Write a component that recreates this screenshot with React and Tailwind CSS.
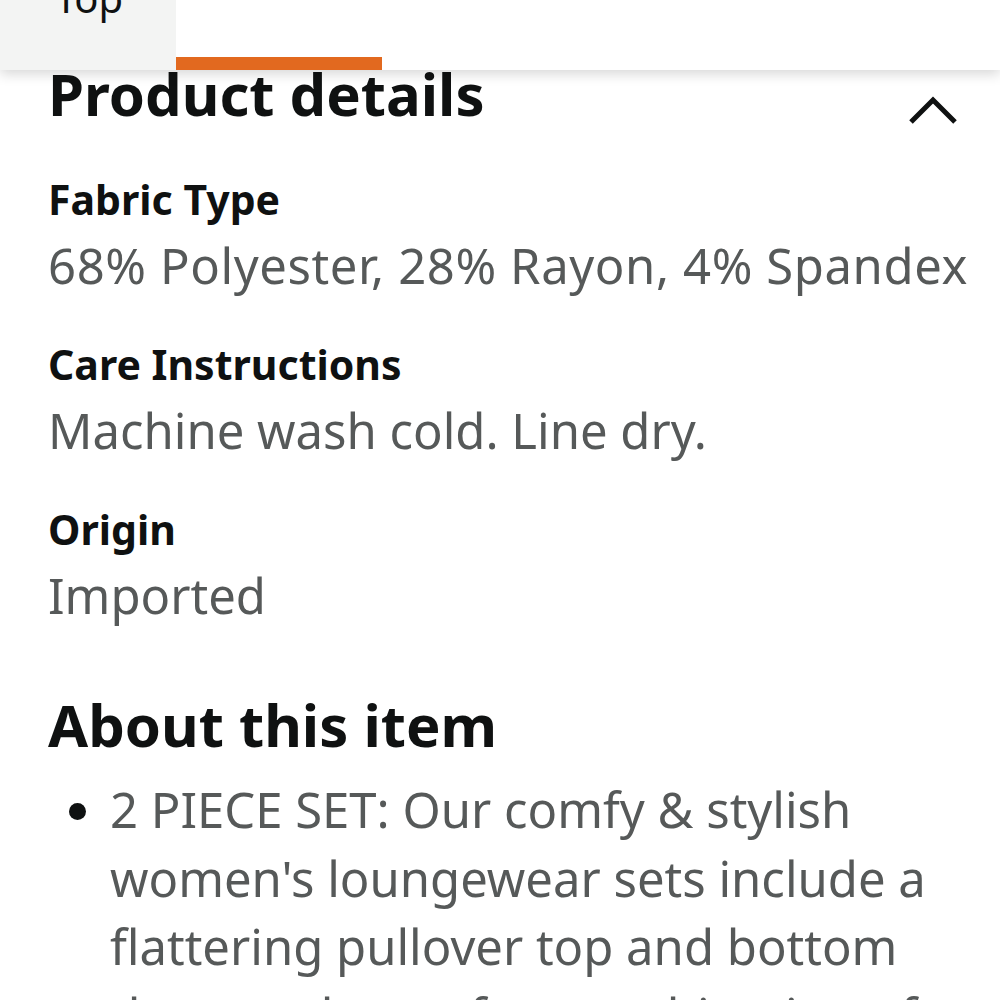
export default function App() {
  const ff = { fontFamily: '"Noto Sans", "Open Sans", Arial, sans-serif' };
  return (
    <div className="w-[1000px] h-[1000px] overflow-hidden bg-white relative" style={ff}>
      <div className="relative z-10 h-[70px] bg-white flex shadow-[0_4px_12px_rgba(0,0,0,0.16)]">
        <div className="w-[176px] h-full bg-[#f3f4f3] flex justify-center">
          <span className="text-[40px] leading-none text-[#0f1111] -mt-[22px] ml-[2px]">Top</span>
        </div>
        <div className="w-[206px] h-full flex flex-col justify-end">
          <div className="h-[13px] bg-[#e2691f]" />
        </div>
      </div>
      <div className="px-[48px]">
        <div className="flex items-start justify-between -mt-[6px]">
          <h2 className="text-[58px] font-bold leading-[60px] text-[#0f1111]">Product details</h2>
          <svg width="50" height="32" viewBox="0 0 50 32" className="mt-[30px] mr-[-6px]">
            <path d="M3 28 L25 6 L47 28" fill="none" stroke="#0f1111" strokeWidth="5" />
          </svg>
        </div>
        <div className="mt-[49px] text-[41px] font-bold leading-[48px] text-[#0f1111]">Fabric Type</div>
        <div className="mt-[8px] text-[49px] leading-[68px] text-[#565959] whitespace-nowrap tracking-[0.6px]">68% Polyester, 28% Rayon, 4% Spandex</div>
        <div className="mt-[41px] text-[41px] font-bold leading-[48px] text-[#0f1111]">Care Instructions</div>
        <div className="mt-[8px] text-[49px] leading-[68px] text-[#565959]">Machine wash cold. Line dry.</div>
        <div className="mt-[41px] text-[41px] font-bold leading-[48px] text-[#0f1111]">Origin</div>
        <div className="mt-[8px] text-[49px] leading-[68px] text-[#565959]">Imported</div>
        <h2 className="mt-[66px] text-[58px] font-bold leading-[60px] text-[#0f1111]">About this item</h2>
        <ul className="mt-[20px] pl-[62px] list-disc marker:text-[#0f1111] text-[49px] leading-[68.5px] text-[#565959]">
          <li>2 PIECE SET: Our comfy &amp; stylish women's loungewear sets include a flattering pullover top and bottom that are the perfect combination of comfort and style.</li>
        </ul>
      </div>
    </div>
  );
}
